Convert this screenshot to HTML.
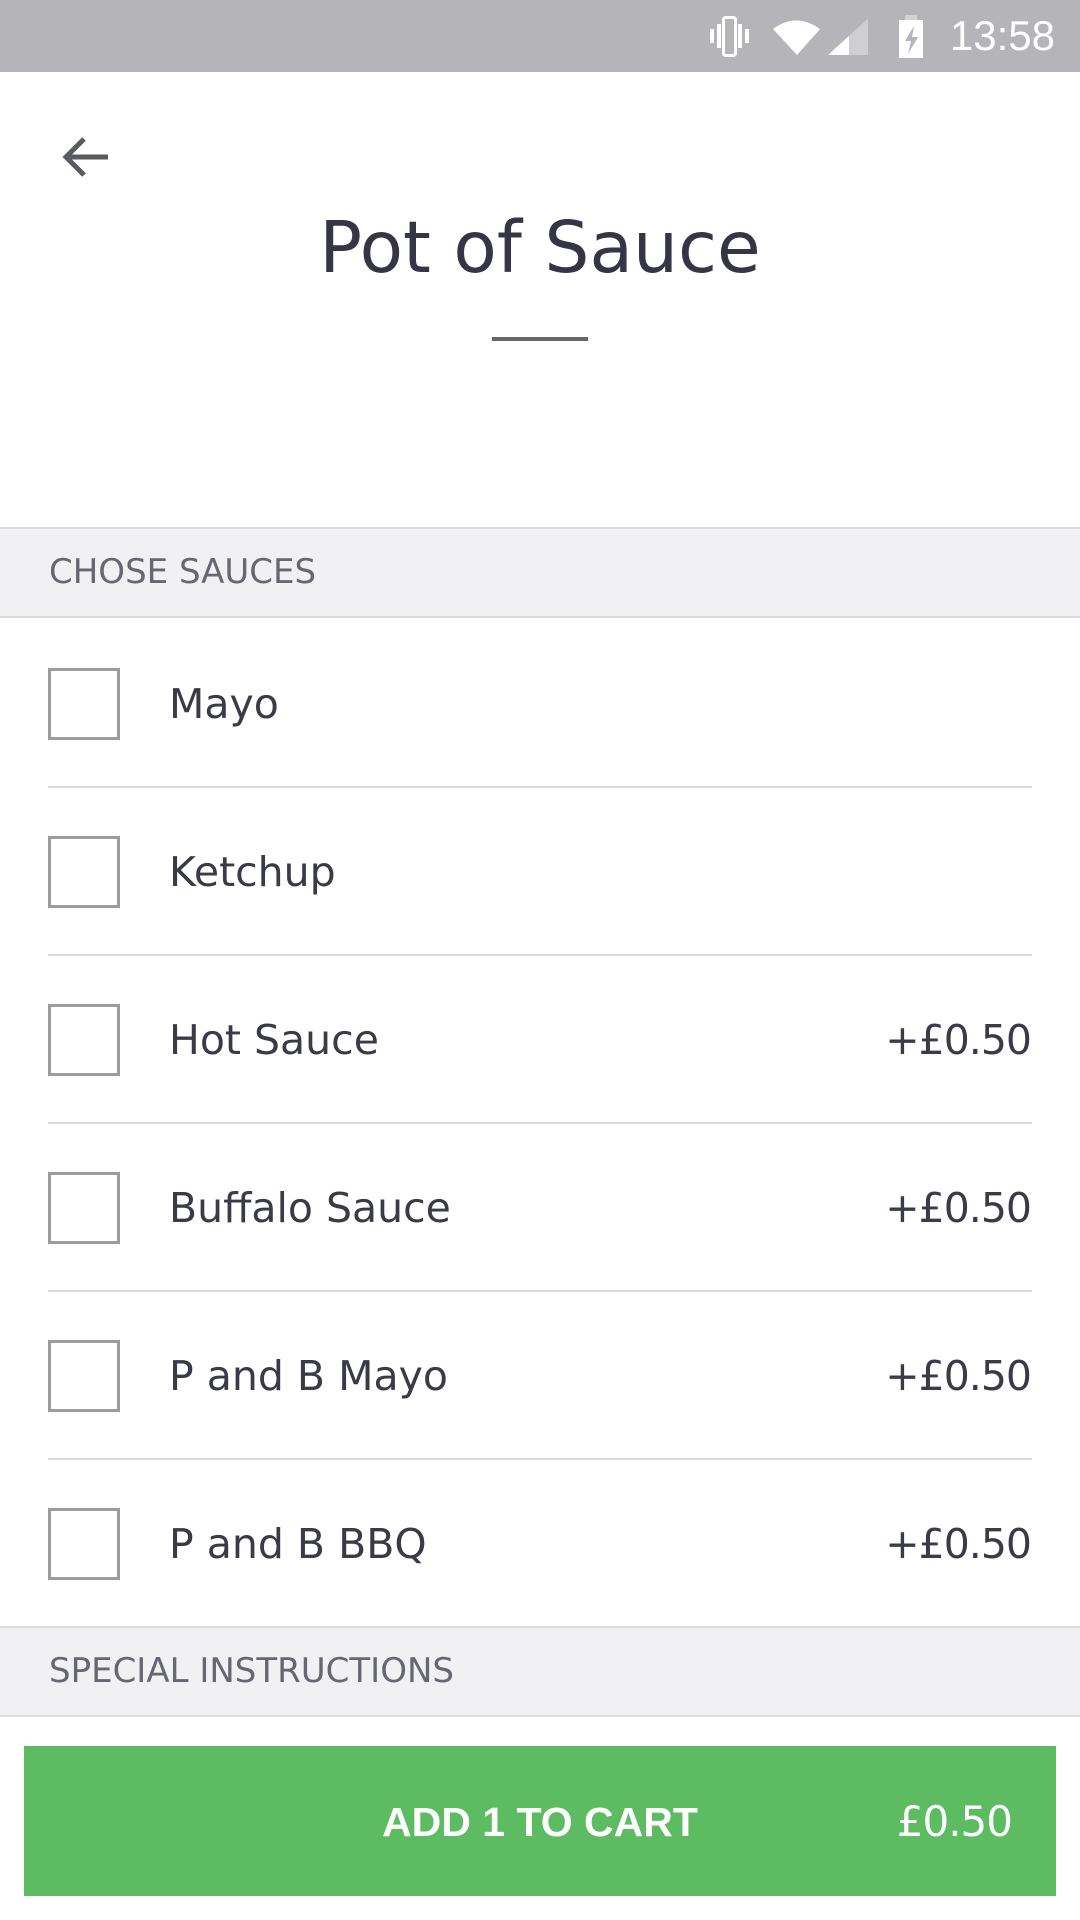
<!DOCTYPE html>
<html><head><meta charset="utf-8"><style>
*{margin:0;padding:0;box-sizing:border-box}
body{width:1080px;height:1920px;background:#fff;font-family:"DejaVu Sans","Liberation Sans",sans-serif;position:relative;overflow:hidden;color:#3a3a48}
.sb{position:absolute;top:0;left:0;width:1080px;height:72px;background:#b5b5b9}
.time{position:absolute;right:25px;top:12px;color:#fff;font-size:42px;font-family:"Liberation Sans",sans-serif}
.title{position:absolute;top:206px;left:0;width:1080px;text-align:center;font-size:71px;color:#353545}
.ul{position:absolute;left:492px;top:337px;width:96px;height:4px;background:#66666e}
.hdr{position:absolute;left:0;width:1080px;height:91px;background:#f1f1f3;border-top:2px solid #dcdce0;border-bottom:2px solid #dcdce0;color:#676772;font-size:34px;padding-left:49px;line-height:87px}
.row{position:absolute;left:0;width:1080px;height:168px}
.cb{position:absolute;left:48px;top:48px;width:72px;height:72px;border:3px solid #9b9ba1}
.nm{position:absolute;left:169px;top:56px;font-size:41px;line-height:56px}
.pr{position:absolute;right:49px;top:56px;font-size:41px;line-height:56px;letter-spacing:-1px}
.dv{position:absolute;left:48px;right:48px;bottom:0;height:2px;background:#dcdce0}
.btn{position:absolute;left:24px;top:1746px;width:1032px;height:150px;background:#5dbb61;color:#fff}
.bt{position:absolute;left:0;width:1032px;text-align:center;top:48px;font-size:41px;font-weight:bold;line-height:56px;font-family:"Liberation Sans",sans-serif}
.bp{position:absolute;right:44px;top:48px;font-size:42px;line-height:56px;letter-spacing:-1px}
</style></head><body>
<div class="sb">
<svg style="position:absolute;left:708px;top:14px" width="160" height="46" viewBox="0 0 160 46">
<g fill="#fff"><rect x="2" y="15" width="4" height="14"/><rect x="9" y="10" width="4" height="24"/><rect x="30" y="10" width="4" height="24"/><rect x="37" y="15" width="4" height="14"/></g>
<rect x="15.5" y="3.5" width="12" height="38" rx="2" fill="none" stroke="#fff" stroke-width="3"/>
<path d="M65 15 Q88 -2 112 15 L89 41 Z" fill="#fff"/>
<path d="M120 41 L165 0 L165 41 Z" fill="#cfcfd3"/>
<path d="M120 41 L141 22 L141 41 Z" fill="#fff"/>
</svg>
<svg style="position:absolute;left:896px;top:14px" width="32" height="46" viewBox="0 0 32 46">
<rect x="9" y="1" width="12" height="6" fill="#d2d2d5"/><rect x="3" y="6" width="24" height="38" fill="#fff"/>
<path d="M18 12 L9 27 L15 27 L12 40 L22 23 L16 23 Z" fill="#b5b5b9"/>
</svg>
<div class="time">13:58</div>
</div>
<svg style="position:absolute;left:58px;top:133px" width="54" height="48" viewBox="0 0 54 48"><path d="M50 24 H8 M26 6 L8 24 L26 42" fill="none" stroke="#5a5a62" stroke-width="5"/></svg>
<div class="title">Pot of Sauce</div>
<div class="ul"></div>
<div class="hdr" style="top:527px">CHOSE SAUCES</div>
<div class="row" style="top:620px"><div class="cb"></div><div class="nm">Mayo</div><div class="dv"></div></div>
<div class="row" style="top:788px"><div class="cb"></div><div class="nm">Ketchup</div><div class="dv"></div></div>
<div class="row" style="top:956px"><div class="cb"></div><div class="nm">Hot Sauce</div><div class="pr">+£0.50</div><div class="dv"></div></div>
<div class="row" style="top:1124px"><div class="cb"></div><div class="nm">Buffalo Sauce</div><div class="pr">+£0.50</div><div class="dv"></div></div>
<div class="row" style="top:1292px"><div class="cb"></div><div class="nm">P and B Mayo</div><div class="pr">+£0.50</div><div class="dv"></div></div>
<div class="row" style="top:1460px"><div class="cb"></div><div class="nm">P and B BBQ</div><div class="pr">+£0.50</div></div>
<div class="hdr" style="top:1626px">SPECIAL INSTRUCTIONS</div>
<div class="btn"><div class="bt">ADD 1 TO CART</div><div class="bp">£0.50</div></div>
</body></html>
